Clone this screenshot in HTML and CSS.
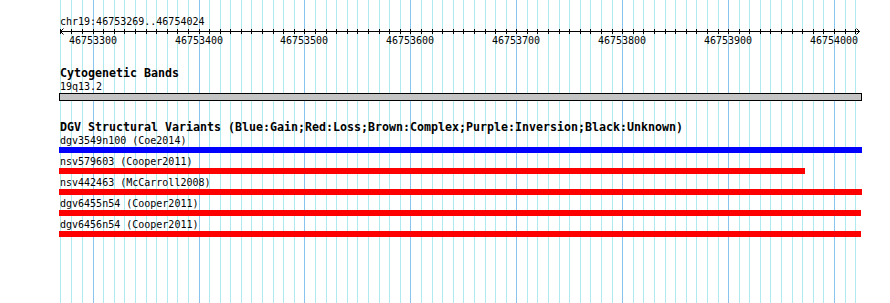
FILE: index.html
```html
<!DOCTYPE html>
<html>
<head>
<meta charset="utf-8">
<title>DGV Structural Variants</title>
<link rel="stylesheet" href="styles.css">
</head>
<body>
<div class="browser">
  <svg class="grid" width="890" height="303" viewBox="0 0 890 303" shape-rendering="crispEdges">
    <path class="grid-minor" d="M60.5 0V303M71.5 0V303M82.5 0V303M103.5 0V303M114.5 0V303M124.5 0V303M135.5 0V303M146.5 0V303M156.5 0V303M167.5 0V303M177.5 0V303M188.5 0V303M209.5 0V303M220.5 0V303M230.5 0V303M241.5 0V303M251.5 0V303M262.5 0V303M273.5 0V303M283.5 0V303M294.5 0V303M315.5 0V303M326.5 0V303M336.5 0V303M347.5 0V303M357.5 0V303M368.5 0V303M379.5 0V303M389.5 0V303M400.5 0V303M421.5 0V303M432.5 0V303M442.5 0V303M453.5 0V303M463.5 0V303M474.5 0V303M485.5 0V303M495.5 0V303M506.5 0V303M527.5 0V303M537.5 0V303M548.5 0V303M559.5 0V303M569.5 0V303M580.5 0V303M590.5 0V303M601.5 0V303M612.5 0V303M633.5 0V303M643.5 0V303M654.5 0V303M665.5 0V303M675.5 0V303M686.5 0V303M696.5 0V303M707.5 0V303M718.5 0V303M739.5 0V303M749.5 0V303M760.5 0V303M770.5 0V303M781.5 0V303M792.5 0V303M802.5 0V303M813.5 0V303M823.5 0V303M845.5 0V303M855.5 0V303"/>
    <path class="grid-major" d="M93.5 0V303M199.5 0V303M304.5 0V303M410.5 0V303M516.5 0V303M622.5 0V303M728.5 0V303M834.5 0V303"/>
  </svg>

  <div class="tracks">
    <section class="ruler">
      <div class="ruler-title">chr19:46753269..46754024</div>
      <svg class="axis" width="890" height="6" viewBox="0 0 890 6">
        <path class="axis-line" shape-rendering="crispEdges" d="M60 3.5H860"/>
        <path class="axis-ticks" shape-rendering="crispEdges" d="M60.5 1V6M71.5 1V6M82.5 1V6M93.5 1V6M103.5 1V6M114.5 1V6M124.5 1V6M135.5 1V6M146.5 1V6M156.5 1V6M167.5 1V6M177.5 1V6M188.5 1V6M199.5 1V6M209.5 1V6M220.5 1V6M230.5 1V6M241.5 1V6M251.5 1V6M262.5 1V6M273.5 1V6M283.5 1V6M294.5 1V6M304.5 1V6M315.5 1V6M326.5 1V6M336.5 1V6M347.5 1V6M357.5 1V6M368.5 1V6M379.5 1V6M389.5 1V6M400.5 1V6M410.5 1V6M421.5 1V6M432.5 1V6M442.5 1V6M453.5 1V6M463.5 1V6M474.5 1V6M485.5 1V6M495.5 1V6M506.5 1V6M516.5 1V6M527.5 1V6M537.5 1V6M548.5 1V6M559.5 1V6M569.5 1V6M580.5 1V6M590.5 1V6M601.5 1V6M612.5 1V6M622.5 1V6M633.5 1V6M643.5 1V6M654.5 1V6M665.5 1V6M675.5 1V6M686.5 1V6M696.5 1V6M707.5 1V6M718.5 1V6M728.5 1V6M739.5 1V6M749.5 1V6M760.5 1V6M770.5 1V6M781.5 1V6M792.5 1V6M802.5 1V6M813.5 1V6M823.5 1V6M834.5 1V6M845.5 1V6M855.5 1V6"/>
        <path class="axis-arrow" d="M63.5 0.5L60.5 3.5L63.5 6.5M856.5 0.5L859.5 3.5L856.5 6.5"/>
      </svg>
      <div class="ticklabels">
        <span class="ticklabel" style="left:93px">46753300</span>
        <span class="ticklabel" style="left:199px">46753400</span>
        <span class="ticklabel" style="left:304px">46753500</span>
        <span class="ticklabel" style="left:410px">46753600</span>
        <span class="ticklabel" style="left:516px">46753700</span>
        <span class="ticklabel" style="left:622px">46753800</span>
        <span class="ticklabel" style="left:728px">46753900</span>
        <span class="ticklabel" style="left:834px">46754000</span>
      </div>
    </section>

    <section class="track cyto">
      <div class="track-title">Cytogenetic Bands</div>
      <div class="feature-label">19q13.2</div>
      <div class="band"></div>
    </section>

    <section class="track dgv">
      <div class="track-title">DGV Structural Variants (Blue:Gain;Red:Loss;Brown:Complex;Purple:Inversion;Black:Unknown)</div>
      <div class="feature">
        <div class="feature-label">dgv3549n100 (Coe2014)</div>
        <div class="bar gain" style="width:803px"></div>
      </div>
      <div class="feature">
        <div class="feature-label">nsv579603 (Cooper2011)</div>
        <div class="bar loss" style="width:746px"></div>
      </div>
      <div class="feature">
        <div class="feature-label">nsv442463 (McCarroll2008)</div>
        <div class="bar loss" style="width:803px"></div>
      </div>
      <div class="feature">
        <div class="feature-label">dgv6455n54 (Cooper2011)</div>
        <div class="bar loss" style="width:802px"></div>
      </div>
      <div class="feature">
        <div class="feature-label">dgv6456n54 (Cooper2011)</div>
        <div class="bar loss" style="width:802px"></div>
      </div>
    </section>
  </div>
</div>
</body>
</html>
```

FILE: styles.css
```css
html, body {
  margin: 0;
  padding: 0;
  background: #ffffff;
}

body {
  font-family: "DejaVu Sans Mono", "Liberation Mono", monospace;
  font-size: 10px;
  line-height: 13px;
  color: #000000;
}

.browser {
  position: relative;
  width: 890px;
  height: 303px;
  overflow: hidden;
}

.grid {
  position: absolute;
  top: 0;
  left: 0;
  z-index: 0;
}

.grid-minor {
  stroke: #aeeaee;
  stroke-width: 1;
  fill: none;
}

.grid-major {
  stroke: #88c4ee;
  stroke-width: 1;
  fill: none;
}

.tracks {
  position: relative;
  z-index: 1;
  padding-top: 15px;
}

.ruler-title {
  padding-left: 60px;
  height: 13px;
}

.axis {
  display: block;
  overflow: visible;
}

.axis-line,
.axis-ticks,
.axis-arrow {
  stroke: #000000;
  stroke-width: 1;
  fill: none;
}

.ticklabels {
  position: relative;
  height: 13px;
}

.ticklabel {
  position: absolute;
  top: 0;
  transform: translateX(-50%);
  white-space: nowrap;
}

.track {
  margin-top: 20px;
}

.track-title {
  padding-left: 60px;
  font-weight: bold;
  font-size: 11.63px;
  line-height: 13px;
  height: 13px;
  white-space: nowrap;
}

.feature-label {
  padding-left: 60px;
  height: 13px;
  white-space: nowrap;
}

.band {
  margin-left: 59px;
  width: 803px;
  height: 8px;
  box-sizing: border-box;
  border: 1px solid #000000;
  background: #c4c4c4;
}

.feature + .feature {
  margin-top: 2px;
}

.bar {
  margin-left: 59px;
  height: 6px;
}

.bar.gain {
  background: #0000ff;
}

.bar.loss {
  background: #ff0000;
}
```
